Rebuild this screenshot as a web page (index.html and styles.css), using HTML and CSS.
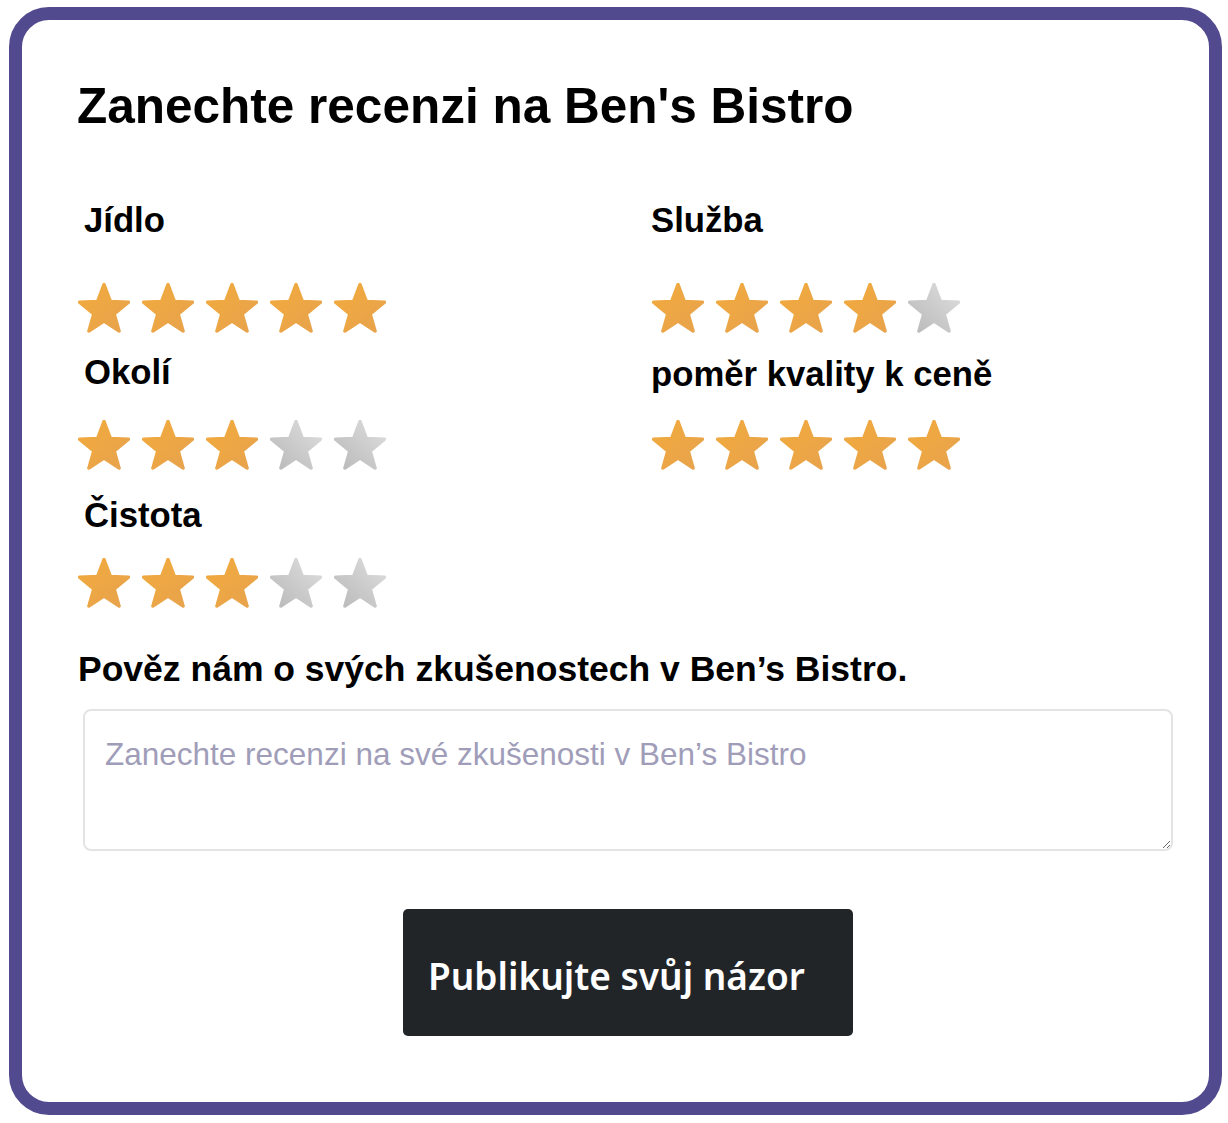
FILE: index.html
```html
<!DOCTYPE html>
<html lang="cs">
<head>
    <meta charset="UTF-8">
    <meta name="viewport" content="width=device-width, initial-scale=1.0">
    <title>Recenze - Ben's Bistro</title>
    <link rel="stylesheet" href="styles.css">
</head>
<body>
    <!-- shared star gradients -->
    <svg class="defs" width="0" height="0" aria-hidden="true">
        <defs>
            <linearGradient id="gold" x1="0" y1="0" x2="1" y2="1">
                <stop offset="0" stop-color="#f2ab3c"/>
                <stop offset="1" stop-color="#e7a24e"/>
            </linearGradient>
            <linearGradient id="grey" x1="0" y1="1" x2="1" y2="0">
                <stop offset="0" stop-color="#b9b9b9"/>
                <stop offset="1" stop-color="#dedede"/>
            </linearGradient>
            <polygon id="star" points="26,0 32.9,18.1 52,18.9 36.9,31.2 42.1,49.5 26,38.9 9.9,49.5 15.1,31.2 0,18.9 19.1,18.1"/>
        </defs>
    </svg>

    <div class="card">
        <h1>Zanechte recenzi na Ben's Bistro</h1>

        <div class="ratings">
            <div class="rating row-1">
                <div class="rating-label">Jídlo</div>
                <div class="stars" data-value="5"></div>
            </div>
            <div class="rating row-1 right">
                <div class="rating-label">Služba</div>
                <div class="stars" data-value="4"></div>
            </div>
            <div class="rating row-2">
                <div class="rating-label">Okolí</div>
                <div class="stars" data-value="3"></div>
            </div>
            <div class="rating row-2 right">
                <div class="rating-label shifted">poměr kvality k ceně</div>
                <div class="stars" data-value="5"></div>
            </div>
            <div class="rating row-3">
                <div class="rating-label">Čistota</div>
                <div class="stars" data-value="3"></div>
            </div>
        </div>

        <h2>Pověz nám o svých zkušenostech v Ben’s Bistro.</h2>
        <textarea class="review" placeholder="Zanechte recenzi na své zkušenosti v Ben’s Bistro"></textarea>

        <div class="actions">
            <button type="button" class="publish">Publikujte svůj názor</button>
        </div>
    </div>

    <script>
        // Fill each rating with five stars
        document.querySelectorAll(".stars").forEach(function (box) {
            const value = parseInt(box.dataset.value, 10);
            let html = "";
            for (let i = 0; i < 5; i++) {
                const fill = i < value ? "url(#gold)" : "url(#grey)";
                html += '<svg class="star" viewBox="-1.5 -1.5 55 53">' +
                    '<use href="#star" fill="' + fill + '" stroke="' + fill + '"/></svg>';
            }
            box.innerHTML = html;
        });
    </script>
</body>
</html>
```

FILE: styles.css
```css
body {
    margin: 0;
    padding: 0;
    background-color: #ffffff;
    color: #000000;
    font-family: "Liberation Sans", Arial, sans-serif;
}

.defs {
    position: absolute;
}

.card {
    box-sizing: border-box;
    width: 1213px;
    height: 1108px;
    margin: 7px 0 0 9px;
    padding: 61px 0 0 55px;
    border: 13px solid #524a8e;
    border-radius: 40px;
    background-color: #ffffff;
}

h1 {
    margin: 0;
    font-size: 49.5px;
    line-height: 1;
    font-weight: bold;
}

.ratings {
    display: grid;
    grid-template-columns: 574px 1fr;
    margin-top: 72px;
}

.rating-label {
    margin-left: 7px;
    font-size: 34.7px;
    line-height: 1;
    font-weight: bold;
}

.right .rating-label {
    margin-left: 0;
}

.rating-label.shifted {
    margin-top: 2px;
}

.stars {
    display: flex;
    gap: 12px;
    margin-left: 1px;
    height: 50px;
}

.star {
    width: 52px;
    height: 50px;
    stroke-width: 3.5;
    stroke-linejoin: round;
}

.row-1 .stars {
    margin-top: 46px;
}

.row-2 {
    margin-top: 22px;
}

.row-2 .stars {
    margin-top: 30px;
}

.row-2 .shifted + .stars {
    margin-top: 28px;
}

.row-3 {
    margin-top: 28px;
}

.row-3 .stars {
    margin-top: 25px;
}

h2 {
    margin: 44px 0 0 1px;
    font-size: 35.5px;
    line-height: 1;
    font-weight: bold;
}

.review {
    display: block;
    box-sizing: border-box;
    width: 1090px;
    height: 142px;
    margin: 22px 0 0 6px;
    padding: 28px 20px 0;
    border: 2px solid #e4e4e4;
    border-radius: 8px;
    font-family: "Liberation Sans", Arial, sans-serif;
    font-size: 31.5px;
    line-height: 1;
    color: #333333;
    resize: vertical;
}

.review::placeholder {
    color: #a09db9;
}

.actions {
    margin-top: 58px;
    padding-left: 326px;
}

.publish {
    box-sizing: border-box;
    width: 450px;
    height: 127px;
    padding: 5px 0 0 25px;
    border: none;
    border-radius: 5px;
    background-color: #222528;
    color: #ffffff;
    font-family: "Noto Sans", sans-serif;
    font-size: 37px;
    font-weight: 600;
    text-align: left;
    cursor: pointer;
}
```
